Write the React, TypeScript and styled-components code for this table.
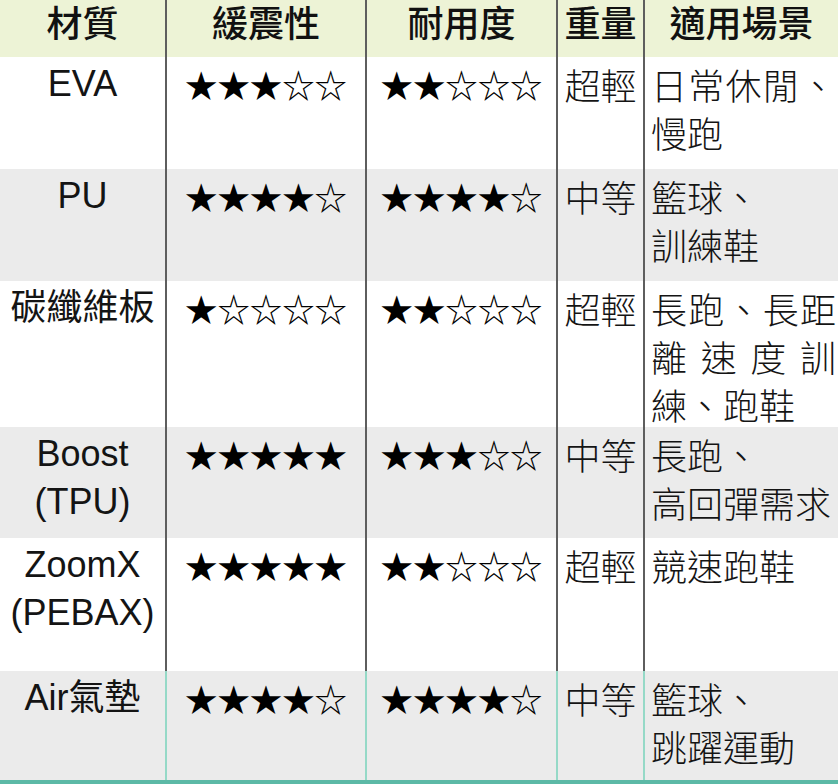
import React from "react";
import styled, { createGlobalStyle } from "styled-components";

const GlobalStyle = createGlobalStyle`
  html, body { margin: 0; padding: 0; background: #ffffff; }
  body { font-family: "Liberation Sans", "Noto Sans CJK TC", sans-serif; color: #141414; }
`;

const COLS = "165px 200px 191px 87px 195px";

const Table = styled.div`
  width: 838px;
  display: flex;
  flex-direction: column;
  border-bottom: 4px solid #5cb9a6;
`;

const Row = styled.div<{ $h: number; $bg: string; $line: string }>`
  display: grid;
  grid-template-columns: ${COLS};
  height: ${(p) => p.$h}px;
  background: ${(p) => p.$bg};

  & > *:not(:first-child) {
    border-left: 2px solid ${(p) => p.$line};
  }
`;

const Cell = styled.div<{ $align?: "center" | "justify" }>`
  box-sizing: border-box;
  padding: 3px 0 0;
  line-height: 48px;
  font-size: 36px;
  text-align: ${(p) => p.$align ?? "center"};
  overflow: hidden;
`;

const HeadCell = styled(Cell)`
  padding: 1px 0 0;
  line-height: 40px;
  font-family: "Noto Sans CJK TC", sans-serif;
  font-weight: 500;
  color: #111;
`;

const Material = styled(Cell)`
  font-weight: 400;
`;

const Stars = styled(Cell)`
  font-family: "Noto Sans CJK TC", sans-serif;
  font-size: 32.4px;
  color: #000;
`;

const Light = styled(Cell)`
  font-family: "Noto Sans CJK TC", sans-serif;
  font-weight: 300;
`;

const Scene = styled(Light)`
  padding: 3px 2px 0 6px;
  text-align: justify;
`;

type RowData = {
  name: React.ReactNode;
  cushion: string;
  durability: string;
  weight: string;
  scene: React.ReactNode;
  h: number;
};

const rows: RowData[] = [
  { name: "EVA", cushion: "★★★☆☆", durability: "★★☆☆☆", weight: "超輕", scene: "日常休閒、慢跑", h: 112 },
  { name: "PU", cushion: "★★★★☆", durability: "★★★★☆", weight: "中等", scene: <>籃球、<br />訓練鞋</>, h: 112 },
  { name: "碳纖維板", cushion: "★☆☆☆☆", durability: "★★☆☆☆", weight: "超輕", scene: "長跑、長距離速度訓練、跑鞋", h: 146 },
  { name: <>Boost<br />(TPU)</>, cushion: "★★★★★", durability: "★★★☆☆", weight: "中等", scene: <>長跑、<br />高回彈需求</>, h: 111 },
  { name: <>ZoomX<br />(PEBAX)</>, cushion: "★★★★★", durability: "★★☆☆☆", weight: "超輕", scene: "競速跑鞋", h: 133 },
  { name: "Air氣墊", cushion: "★★★★☆", durability: "★★★★☆", weight: "中等", scene: <>籃球、<br />跳躍運動</>, h: 109 },
];

export default function App() {
  return (
    <>
      <GlobalStyle />
      <Table>
        <Row $h={57} $bg="#edf3d6" $line="#5e5e5e">
          <HeadCell>材質</HeadCell>
          <HeadCell>緩震性</HeadCell>
          <HeadCell>耐用度</HeadCell>
          <HeadCell>重量</HeadCell>
          <HeadCell>適用場景</HeadCell>
        </Row>
        {rows.map((r, i) => {
          const last = i === rows.length - 1;
          return (
            <Row
              key={i}
              $h={r.h}
              $bg={i % 2 === 1 ? "#ebebeb" : "#ffffff"}
              $line={last ? "#95d9c7" : "#5e5e5e"}
            >
              <Material>{r.name}</Material>
              <Stars>{r.cushion}</Stars>
              <Stars>{r.durability}</Stars>
              <Light>{r.weight}</Light>
              <Scene>{r.scene}</Scene>
            </Row>
          );
        })}
      </Table>
    </>
  );
}
